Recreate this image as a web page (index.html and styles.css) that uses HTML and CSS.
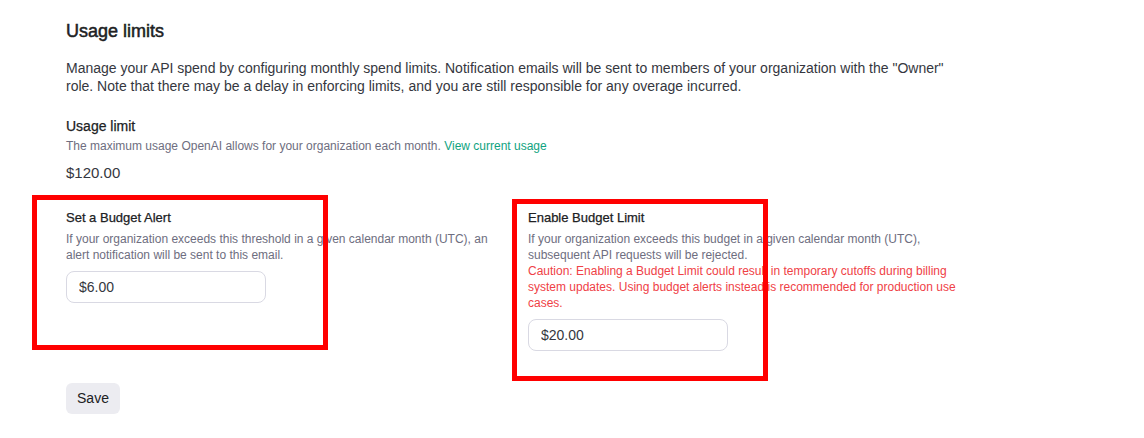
FILE: index.html
```html
<!DOCTYPE html>
<html lang="en">
<head>
<meta charset="utf-8">
<title>Usage limits</title>
<link rel="stylesheet" href="styles.css">
</head>
<body>
<main class="page">
  <h1 class="title">Usage limits</h1>
  <p class="intro">Manage your API spend by configuring monthly spend limits. Notification emails will be sent to members of your organization with the "Owner" role. Note that there may be a delay in enforcing limits, and you are still responsible for any overage incurred.</p>

  <section class="field">
    <div class="label">Usage limit</div>
    <div class="desc">The maximum usage OpenAI allows for your organization each month. <a class="link" href="#">View current usage</a></div>
    <div class="amount">$120.00</div>
  </section>

  <div class="budgets">
    <section class="budget">
      <div class="budget-label">Set a Budget Alert</div>
      <div class="desc">If your organization exceeds this threshold in a given calendar month (UTC), an alert notification will be sent to this email.</div>
      <input class="money" type="text" value="$6.00">
    </section>
    <section class="budget">
      <div class="budget-label">Enable Budget Limit</div>
      <div class="desc">If your organization exceeds this budget in a given calendar month (UTC), subsequent API requests will be rejected.<br><span class="caution">Caution: Enabling a Budget Limit could result in temporary cutoffs during billing system updates. Using budget alerts instead is recommended for production use cases.</span></div>
      <input class="money" type="text" value="$20.00">
    </section>
  </div>

  <button class="save" type="button">Save</button>

  <div class="mark mark-alert"></div>
  <div class="mark mark-limit"></div>
</main>
</body>
</html>
```

FILE: styles.css
```css
* { box-sizing: border-box; }

html, body {
  margin: 0;
  padding: 0;
  background: #ffffff;
}

body {
  font-family: "Liberation Sans", Arial, sans-serif;
  color: #353740;
}

.page {
  position: relative;
  width: 1144px;
  height: 438px;
  padding: 19px 0 0 66px;
}

.title {
  margin: 0;
  font-size: 18px;
  line-height: 24px;
  font-weight: 400;
  -webkit-text-stroke: 0.5px #202123;
  color: #202123;
}

.intro {
  margin: 16px 0 0;
  width: 890px;
  font-size: 14px;
  line-height: 18.4px;
  color: #353740;
}

.field {
  margin-top: 20px;
}

.label {
  font-size: 14px;
  line-height: 20px;
  color: #202123;
  -webkit-text-stroke: 0.25px #202123;
}

.desc {
  font-size: 12px;
  line-height: 16px;
  color: #6e6e80;
}

.field .desc {
  margin-top: 2px;
}

.link {
  color: #10a37f;
  text-decoration: none;
}

.amount {
  margin-top: 9px;
  font-size: 15px;
  line-height: 20px;
  color: #353740;
}

.budgets {
  margin-top: 26px;
  display: grid;
  grid-template-columns: 430px 430px;
  column-gap: 32px;
}

.budget {
  display: flex;
  flex-direction: column;
  align-items: flex-start;
}

.budget-label {
  font-size: 13px;
  line-height: 18px;
  color: #202123;
  -webkit-text-stroke: 0.25px #202123;
}

.budget .desc {
  margin-top: 4px;
}

.caution {
  color: #ef4146;
}

.money {
  margin-top: 8px;
  width: 200px;
  height: 32px;
  padding: 0 12px;
  border: 1px solid #d9d9e3;
  border-radius: 8px;
  font-family: inherit;
  font-size: 14px;
  color: #353740;
  background: #ffffff;
  outline: none;
}

.save {
  display: block;
  margin-top: 32px;
  width: 54px;
  height: 31px;
  padding: 0;
  border: none;
  border-radius: 6px;
  background: #ececf1;
  font-family: inherit;
  font-size: 14px;
  color: #202123;
}

.mark {
  position: absolute;
  border: 5px solid #ff0000;
  pointer-events: none;
}

.mark-alert {
  left: 32px;
  top: 195px;
  width: 296px;
  height: 155px;
}

.mark-limit {
  left: 512px;
  top: 199px;
  width: 256px;
  height: 182px;
}
```
